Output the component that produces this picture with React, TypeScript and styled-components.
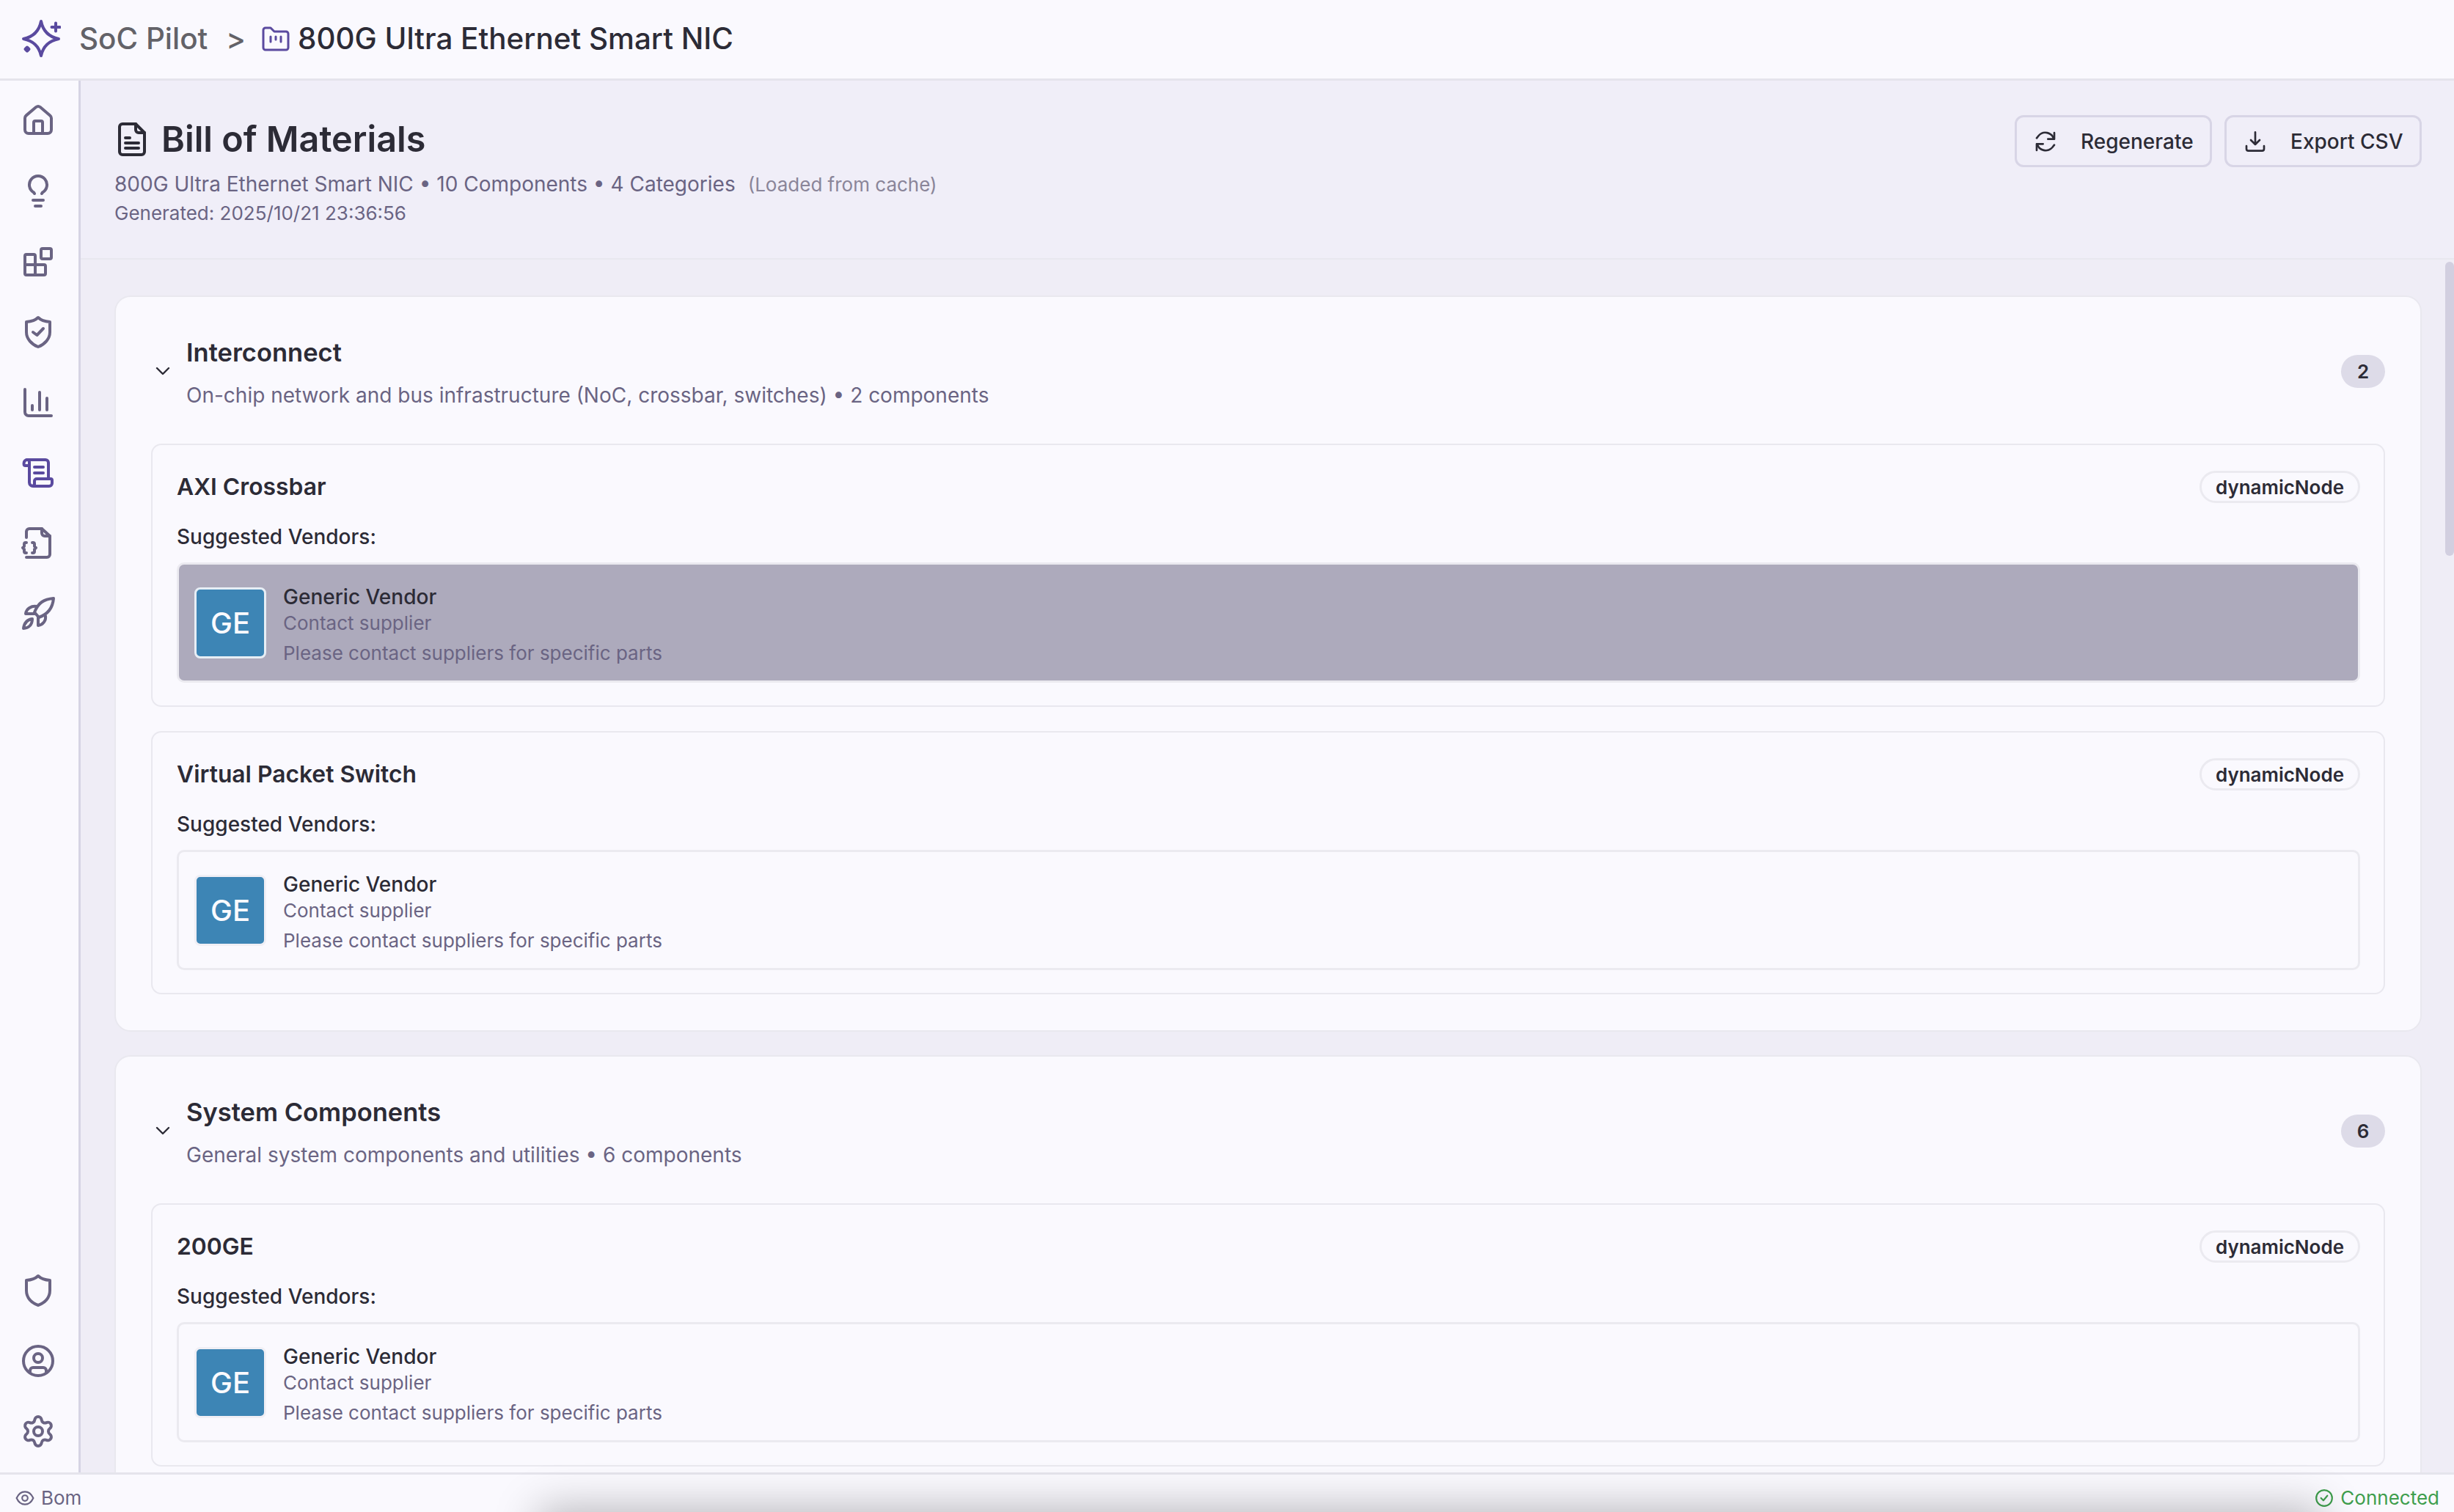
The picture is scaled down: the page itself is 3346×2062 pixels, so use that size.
import React from "react";
import styled, { createGlobalStyle } from "styled-components";
import { Settings } from "lucide-react";

const Global = createGlobalStyle`
  html, body { margin: 0; padding: 0; width: 100%; height: 100%; overflow: hidden; background: #faf9fe; }
  * { box-sizing: border-box; }
  body { font-family: Inter, "Liberation Sans", sans-serif; color: #2c2b36; }
`;

const Shell = styled.div`
  position: relative;
  width: 3346px;
  height: 2062px;
  overflow: hidden;
  display: flex;
  flex-direction: column;
`;

const TopBar = styled.header`
  height: 110px;
  flex: none;
  background: #faf9fe;
  border-bottom: 3px solid #e5e4ec;
  display: flex;
  align-items: center;
  padding: 0 0 1px 27px;
  position: relative;
  z-index: 2;
`;
const Brand = styled.span`
  margin-left: 25px;
  font-size: 40.4px;
  font-weight: 500;
  color: #636268;
  line-height: 1;
`;
const Crumb = styled.span`
  margin: 0 22px 0 25px;
  font-size: 40px;
  font-weight: 500;
  color: #636268;
  line-height: 1;
`;
const ProjectName = styled.span`
  margin-left: 11px;
  font-size: 40.4px;
  font-weight: 500;
  color: #2c2b36;
  line-height: 1;
`;

const Body = styled.div`
  flex: 1;
  min-height: 0;
  display: flex;
`;
const Sidebar = styled.nav`
  width: 110px;
  flex: none;
  background: #faf9fe;
  border-right: 3px solid #d6d4e4;
  display: flex;
  flex-direction: column;
  padding: 30px 0 32px 28px;
`;
const NavGroup = styled.div`
  display: flex;
  flex-direction: column;
  gap: 48px;
`;
const NavSpacer = styled.div`
  flex: 1;
`;
const NavIcon = styled.svg<{ $active?: boolean }>`
  width: 48px;
  height: 48px;
  display: block;
  flex: none;
  fill: none;
  stroke: ${(p) => (p.$active ? "#5a4a9f" : "#6a6483")};
  stroke-width: 2;
  stroke-linecap: round;
  stroke-linejoin: round;
`;
const GearWrap = styled.div`
  width: 48px;
  height: 48px;
  color: #6a6483;
`;

const Main = styled.main`
  flex: 1;
  min-width: 0;
  display: flex;
  flex-direction: column;
  background: #efedf6;
`;
const PageHeader = styled.section`
  height: 244px;
  flex: none;
  background: #f0eef8;
  border-bottom: 2px solid #e9e8ef;
  display: flex;
  justify-content: space-between;
  padding: 47px 44px 0 46px;
`;
const HeaderInfo = styled.div`
  display: flex;
  flex-direction: column;
`;
const TitleRow = styled.div`
  display: flex;
  align-items: center;
  gap: 20px;
  height: 66px;
  padding-left: 4px;
`;
const PageTitle = styled.h1`
  margin: 0;
  font-size: 48.5px;
  font-weight: 600;
  line-height: 66px;
  color: #2c2b36;
`;
const MetaLine = styled.div`
  margin-top: 8px;
  font-size: 28px;
  line-height: 40px;
  color: #6a6483;
`;
const CacheNote = styled.span`
  margin-left: 17px;
  font-size: 26px;
  color: #8a8599;
`;
const GeneratedLine = styled.div`
  font-size: 26px;
  line-height: 38px;
  color: #6a6483;
`;
const HeaderActions = styled.div`
  display: flex;
  gap: 17px;
  height: 71px;
`;
const ActionButton = styled.button`
  width: 269px;
  height: 71px;
  border: 3px solid #d8d5e6;
  border-radius: 12px;
  background: transparent;
  display: flex;
  align-items: center;
  padding: 0 0 0 23px;
  gap: 32px;
  font-family: inherit;
  font-size: 28px;
  font-weight: 500;
  color: #2c2b36;
`;
const ButtonIcon = styled.svg`
  width: 32px;
  height: 32px;
  flex: none;
  fill: none;
  stroke: #2c2b36;
  stroke-width: 2;
  stroke-linecap: round;
  stroke-linejoin: round;
`;

const Scroll = styled.div`
  flex: 1;
  min-height: 0;
  overflow: hidden;
  padding: 49px 44px 0 46px;
  display: flex;
  flex-direction: column;
  gap: 32px;
`;
const Section = styled.section`
  flex: none;
  width: 3146px;
  border: 2px solid #e9e8ef;
  border-radius: 22px;
  background: #faf9fe;
  padding: 0 48px 49px 48px;
`;
const SectionHead = styled.div`
  display: flex;
  align-items: center;
  padding: 51px 0 46px 0;
`;
const Chevron = styled.svg`
  width: 22px;
  height: 14px;
  flex: none;
  margin: 0 0 3px 5px;
  fill: none;
  stroke: #2c2b36;
  stroke-width: 2.4;
  stroke-linecap: round;
  stroke-linejoin: round;
`;
const SectionText = styled.div`
  flex: 1;
  margin-left: 21px;
`;
const SectionTitle = styled.h2`
  margin: 0;
  font-size: 34.5px;
  font-weight: 600;
  line-height: 50px;
  color: #2c2b36;
`;
const SectionSub = styled.div`
  margin-top: 13px;
  font-size: 28px;
  line-height: 40px;
  color: #6a6483;
`;
const CountBadge = styled.span`
  width: 60px;
  height: 45px;
  margin-bottom: 3px;
  border-radius: 23px;
  background: #dddbe8;
  display: flex;
  align-items: center;
  justify-content: center;
  font-size: 26px;
  font-weight: 600;
  color: #2c2b36;
`;
const ItemList = styled.div`
  display: flex;
  flex-direction: column;
  gap: 33px;
`;
const Item = styled.article`
  border: 2px solid #e9e8ef;
  border-radius: 14px;
  padding: 35px 32px 31px 33px;
`;
const ItemHead = styled.div`
  display: flex;
  align-items: center;
  justify-content: space-between;
  height: 44px;
`;
const ItemName = styled.h3`
  margin: 0;
  font-size: 31.8px;
  font-weight: 600;
  line-height: 44px;
  color: #2c2b36;
`;
const TypePill = styled.span`
  height: 44px;
  width: 219px;
  border: 3px solid #ebeaf0;
  border-radius: 22px;
  display: flex;
  align-items: center;
  justify-content: center;
  font-size: 26px;
  font-weight: 600;
  color: #2c2b36;
`;
const VendorsLabel = styled.div`
  margin: 28px 0 17px;
  font-size: 28px;
  font-weight: 500;
  line-height: 36px;
  color: #2c2b36;
`;
const VendorRow = styled.div<{ $selected?: boolean }>`
  height: 164px;
  border: 3px solid #ebeaf0;
  border-radius: 10px;
  background: ${(p) => (p.$selected ? "#adaabc" : "transparent")};
  display: flex;
  align-items: center;
  padding: 0 0 0 21px;
  gap: 23px;
`;
const VendorLogo = styled.div<{ $selected?: boolean }>`
  width: 98px;
  height: 97px;
  flex: none;
  border: 3px solid ${(p) => (p.$selected ? "#e7eef5" : "#f0eff5")};
  border-radius: 8px;
  background: #3d85b5;
  color: #fafafe;
  display: flex;
  align-items: center;
  justify-content: center;
  font-size: 40px;
  font-weight: 500;
`;
const VendorText = styled.div`
  display: flex;
  flex-direction: column;
  padding-top: 7px;
`;
const VendorName = styled.div`
  font-size: 28px;
  font-weight: 500;
  line-height: 36px;
  color: #2c2b36;
`;
const VendorSub = styled.div`
  font-size: 26px;
  line-height: 36px;
  color: #6a6483;
`;
const VendorNote = styled.div`
  margin-top: 5px;
  font-size: 26px;
  line-height: 36px;
  color: #6a6483;
`;

const StatusBar = styled.footer`
  height: 54px;
  flex: none;
  background: #faf9fe;
  border-top: 3px solid #e5e4ec;
  display: flex;
  align-items: center;
  justify-content: space-between;
  padding: 12px 20px 0 21px;
  font-size: 26px;
  position: relative;
  z-index: 1;
`;
const StatusItem = styled.div<{ $ok?: boolean }>`
  display: flex;
  align-items: center;
  gap: 9px;
  color: ${(p) => (p.$ok ? "#3f9e4d" : "#6a6483")};
`;
const StatusIcon = styled.svg`
  width: 26px;
  height: 26px;
  flex: none;
  fill: none;
  stroke: currentColor;
  stroke-width: 2;
  stroke-linecap: round;
  stroke-linejoin: round;
`;

const ScrollThumb = styled.div`
  position: absolute;
  left: 3334px;
  top: 357px;
  width: 12px;
  height: 401px;
  border-radius: 6px;
  background: #d2cfe0;
  z-index: 3;
`;
const OffscreenDrop = styled.div`
  position: absolute;
  left: 740px;
  top: 2064px;
  width: 2420px;
  height: 60px;
  box-shadow: 0 0 60px 6px rgba(0, 0, 0, 0.28);
  z-index: 4;
`;

const Logo = () => (
  <svg width="56" height="56" viewBox="0 0 56 56" fill="none" stroke="#5a4a9f" strokeWidth="4" strokeLinecap="round" strokeLinejoin="round">
    <path d="M29 4 Q33 24 53 28 Q33 32 29 51 Q25 32 5 28 Q25 24 29 4Z" />
    <path d="M49 6.5 V17.5 M43.5 12 H54.5" />
    <path d="M10 39.5 L12.5 42 L10 44.5 L7.5 42Z" fill="#5a4a9f" />
  </svg>
);

const ProjectFolder = () => (
  <svg width="38" height="34" viewBox="0 0 38 34" fill="none" stroke="#5a4a9f" strokeWidth="3" strokeLinecap="round" strokeLinejoin="round">
    <path d="M2 5 A3 3 0 0 1 5 2 H12 L17 7 H33 A3 3 0 0 1 36 10 V29 A3 3 0 0 1 33 32 H5 A3 3 0 0 1 2 29Z" />
    <path d="M12 14 V21 M19 14 V18 M26 14 V21" />
  </svg>
);

const navIcons: { d: string[]; active?: boolean }[] = [
  { d: ["M3 10.5 C3 9.8 3.3 9.2 3.9 8.7 L10.6 3 C11.4 2.4 12.6 2.4 13.4 3 L20.1 8.7 C20.7 9.2 21 9.8 21 10.5 V18.5 C21 19.9 19.9 21 18.5 21 H5.5 C4.1 21 3 19.9 3 18.5 Z", "M9 21 V13.5 C9 12.9 9.4 12.5 10 12.5 H14 C14.6 12.5 15 12.9 15 13.5 V21"] },
  { d: ["M9.5 14 L9 13.2 A6 6 0 1 1 15 13.2 L14.5 14", "M8.5 18.5 H15.5", "M10 22.5 H14"] },
  { d: ["M10 14.5 V8.5 a1 1 0 0 0 -1 -1 H4 a1 1 0 0 0 -1 1 V20.5 a1 1 0 0 0 1 1 H16 a1 1 0 0 0 1 -1 V15.5 a1 1 0 0 0 -1 -1 H3", "M10 14.5 V21.5", "M15 3.5 H20 a1 1 0 0 1 1 1 V9.5 a1 1 0 0 1 -1 1 H15 a1 1 0 0 1 -1 -1 V4.5 a1 1 0 0 1 1 -1Z"] },
  { d: ["M12 2.5 C13.5 4 16.5 5.2 20 5.5 V12.5 C20 17 16.5 20.8 12 22.5 C7.5 20.8 4 17 4 12.5 V5.5 C7.5 5.2 10.5 4 12 2.5Z", "M8.5 12.5 L11.2 14.5 L15.5 10"] },
  { d: ["M3 3.5 V19 a2.5 2.5 0 0 0 2.5 2.5 H21", "M8 14.5 V17.5", "M13 5.5 V17.5", "M18 9.5 V17.5"] },
  { active: true, d: ["M4.5 3.5 H17 A2 2 0 0 1 19 5.5 V16.5", "M4.5 3.5 A2.25 2.25 0 0 0 2.3 5.75 V6.5 A1 1 0 0 0 3.3 7.5 H6", "M4.5 3.5 A1.5 1.5 0 0 1 6 5 V19 A2.5 2.5 0 0 0 8.5 21.5 H19.5 A2 2 0 0 0 21.5 19.5 V17.5 A1 1 0 0 0 20.5 16.5 H11 A1.5 1.5 0 0 0 9.5 18 V19 A2.5 2.5 0 0 1 8.5 21.5", "M9.5 8.5 H15.5", "M9.5 12.5 H15.5"] },
  { d: ["M4 8.5 V4.5 a2 2 0 0 1 2 -2 H14.5 L20 7.5 V20 a2 2 0 0 1 -2 2 H4", "M14.5 2.5 V5.5 a2 2 0 0 0 2 2 H20", "M4 12 H3.5 a1 1 0 0 0 -1 1 V14.5 L1.5 15.5 L2.5 16.5 V18 a1 1 0 0 0 1 1 H4", "M8 12 H8.5 a1 1 0 0 1 1 1 V14.5 L10.5 15.5 L9.5 16.5 V18 a1 1 0 0 1 -1 1 H8"] },
  { d: ["M22.5 2 C16 2.5 12 5 9.5 11.5 L12.5 15 C19.5 12.5 22 8 22.5 2Z", "M10.8 7.5 C7.5 7 4 9 3.5 12.5 L9.5 12.5", "M17 14 C17.5 17 15.5 20 12 20.5 L12 15", "M8 16 C4.5 16.5 2.5 19 2 22.5 C5.5 22.5 8 20 8 16Z"] },
];

const Nav = ({ d, active }: { d: string[]; active?: boolean }) => (
  <NavIcon viewBox="0 0 24 24" $active={active}>
    {d.map((p) => (
      <path key={p} d={p} />
    ))}
  </NavIcon>
);

const Vendor = ({ selected }: { selected?: boolean }) => (
  <VendorRow $selected={selected}>
    <VendorLogo $selected={selected}>GE</VendorLogo>
    <VendorText>
      <VendorName>Generic Vendor</VendorName>
      <VendorSub>Contact supplier</VendorSub>
      <VendorNote>Please contact suppliers for specific parts</VendorNote>
    </VendorText>
  </VendorRow>
);

const BomItem = ({ name, selected }: { name: string; selected?: boolean }) => (
  <Item>
    <ItemHead>
      <ItemName>{name}</ItemName>
      <TypePill>dynamicNode</TypePill>
    </ItemHead>
    <VendorsLabel>Suggested Vendors:</VendorsLabel>
    <Vendor selected={selected} />
  </Item>
);

const BomSection = ({ title, sub, count, items }: { title: string; sub: string; count: number; items: { name: string; selected?: boolean }[] }) => (
  <Section>
    <SectionHead>
      <Chevron viewBox="0 0 22 14">
        <path d="M3 3 L11 11 L19 3" />
      </Chevron>
      <SectionText>
        <SectionTitle>{title}</SectionTitle>
        <SectionSub>{sub}</SectionSub>
      </SectionText>
      <CountBadge>{count}</CountBadge>
    </SectionHead>
    <ItemList>
      {items.map((i) => (
        <BomItem key={i.name} name={i.name} selected={i.selected} />
      ))}
    </ItemList>
  </Section>
);

export default function App() {
  return (
    <Shell>
      <Global />
      <TopBar>
        <Logo />
        <Brand>SoC Pilot</Brand>
        <Crumb>&gt;</Crumb>
        <ProjectFolder />
        <ProjectName>800G Ultra Ethernet Smart NIC</ProjectName>
      </TopBar>
      <Body>
        <Sidebar>
          <NavGroup>
            {navIcons.map((n, i) => (
              <Nav key={i} d={n.d} active={n.active} />
            ))}
          </NavGroup>
          <NavSpacer />
          <NavGroup>
            <Nav d={["M12 2 C13.5 3.5 16.5 4.8 20 5 V12 C20 17 16.5 20.5 12 22 C7.5 20.5 4 17 4 12 V5 C7.5 4.8 10.5 3.5 12 2Z"]} />
            <NavIcon viewBox="0 0 24 24">
              <circle cx="12" cy="12" r="10" />
              <circle cx="12" cy="10" r="3" />
              <path d="M6.5 19.5 V18.5 a2 2 0 0 1 2 -2 h7 a2 2 0 0 1 2 2 v1" />
            </NavIcon>
            <GearWrap>
              <Settings size={48} strokeWidth={2} />
            </GearWrap>
          </NavGroup>
        </Sidebar>
        <Main>
          <PageHeader>
            <HeaderInfo>
              <TitleRow>
                <svg width="40" height="48" viewBox="0 0 40 48" fill="none" stroke="#2c2b36" strokeWidth="4" strokeLinecap="round" strokeLinejoin="round">
                  <path d="M25 3 H7 A4 4 0 0 0 3 7 V41 A4 4 0 0 0 7 45 H33 A4 4 0 0 0 37 41 V15 Z" />
                  <path d="M25 3 V11 A4 4 0 0 0 29 15 H37" />
                  <path d="M11 22 H17 M11 29 H29 M11 36 H29" />
                </svg>
                <PageTitle>Bill of Materials</PageTitle>
              </TitleRow>
              <MetaLine>
                800G Ultra Ethernet Smart NIC • 10 Components • 4 Categories
                <CacheNote>(Loaded from cache)</CacheNote>
              </MetaLine>
              <GeneratedLine>Generated: 2025/10/21 23:36:56</GeneratedLine>
            </HeaderInfo>
            <HeaderActions>
              <ActionButton>
                <ButtonIcon viewBox="0 0 24 24">
                  <path d="M20.5 9.5 A9 9 0 0 0 5 6 L3 8.5 M3.5 14.5 A9 9 0 0 0 19 18 L21 15.5" />
                  <path d="M21 3 V9.5 H14.5 M3 21 V14.5 H9.5" />
                </ButtonIcon>
                Regenerate
              </ActionButton>
              <ActionButton>
                <ButtonIcon viewBox="0 0 24 24">
                  <path d="M12 2.5 V15 M7.5 10.5 L12 15 L16.5 10.5" />
                  <path d="M3 16.5 V19.5 A2 2 0 0 0 5 21.5 H19 A2 2 0 0 0 21 19.5 V16.5" />
                </ButtonIcon>
                Export CSV
              </ActionButton>
            </HeaderActions>
          </PageHeader>
          <Scroll>
            <BomSection
              title="Interconnect"
              sub="On-chip network and bus infrastructure (NoC, crossbar, switches) • 2 components"
              count={2}
              items={[{ name: "AXI Crossbar", selected: true }, { name: "Virtual Packet Switch" }]}
            />
            <BomSection
              title="System Components"
              sub="General system components and utilities • 6 components"
              count={6}
              items={[{ name: "200GE" }]}
            />
          </Scroll>
        </Main>
      </Body>
      <StatusBar>
        <StatusItem>
          <StatusIcon viewBox="0 0 24 24">
            <path d="M1.5 12 C4 6.5 8 4 12 4 C16 4 20 6.5 22.5 12 C20 17.5 16 20 12 20 C8 20 4 17.5 1.5 12Z" />
            <circle cx="12" cy="12" r="3.5" />
          </StatusIcon>
          Bom
        </StatusItem>
        <StatusItem $ok>
          <StatusIcon viewBox="0 0 24 24">
            <circle cx="12" cy="12" r="10" />
            <path d="M8 12 L11 15 L16 9" />
          </StatusIcon>
          Connected
        </StatusItem>
      </StatusBar>
      <ScrollThumb />
      <OffscreenDrop />
    </Shell>
  );
}
